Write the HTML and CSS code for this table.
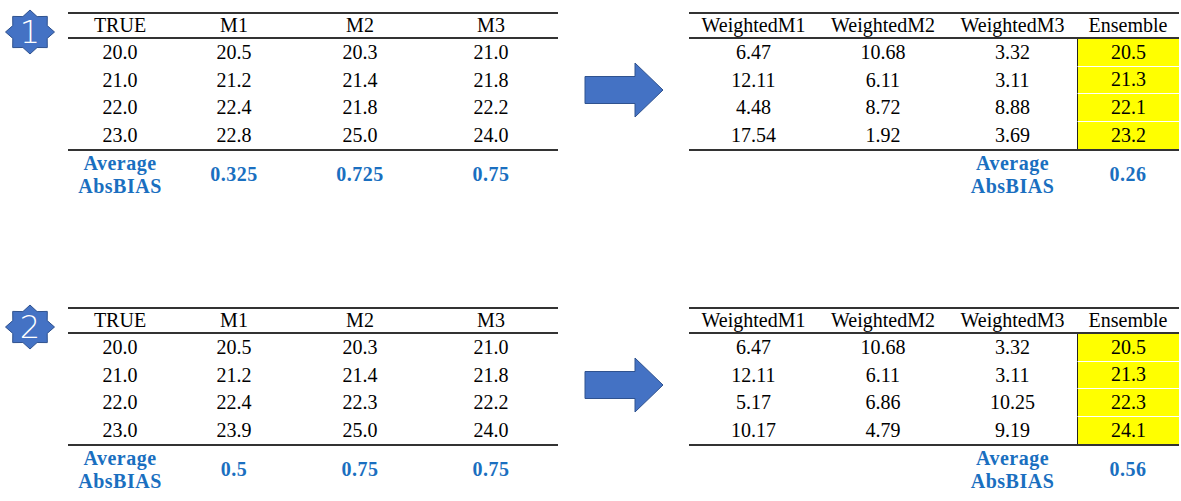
FILE: index.html
```html
<!DOCTYPE html>
<html>
<head>
<meta charset="utf-8">
<link rel="stylesheet" href="styles.css">
</head>
<body>
<div class="page">

  <section class="step">
    <div class="badge">
      <svg width="52" height="48" viewBox="0 0 52 48">
        <polygon points="26,2 33.1,8.6 43.3,8.4 43.2,17.6 50.5,24 43.2,30.4 43.3,39.6 33.1,39.5 26,46 18.9,39.5 8.7,39.6 8.8,30.4 1.5,24 8.8,17.6 8.7,8.4 18.9,8.6" fill="#4472C4" stroke="#2F528F" stroke-width="1"/>
      </svg>
      <span class="badge-num">1</span>
    </div>

    <div class="tbl tbl-left">
      <div class="row head"><span>TRUE</span><span>M1</span><span>M2</span><span>M3</span></div>
      <div class="body">
        <div class="row"><span>20.0</span><span>20.5</span><span>20.3</span><span>21.0</span></div>
        <div class="row"><span>21.0</span><span>21.2</span><span>21.4</span><span>21.8</span></div>
        <div class="row"><span>22.0</span><span>22.4</span><span>21.8</span><span>22.2</span></div>
        <div class="row"><span>23.0</span><span>22.8</span><span>25.0</span><span>24.0</span></div>
      </div>
      <div class="row foot"><span class="lbl">Average<br>AbsBIAS</span><span>0.325</span><span>0.725</span><span>0.75</span></div>
    </div>

    <div class="arrow">
      <svg width="80" height="57" viewBox="0 0 80 57">
        <polygon points="1,14.5 51,14.5 51,1 79,28 51,55 51,41.5 1,41.5" fill="#4472C4" stroke="#2F528F" stroke-width="1"/>
      </svg>
    </div>

    <div class="tbl tbl-right">
      <div class="row head"><span>WeightedM1</span><span>WeightedM2</span><span>WeightedM3</span><span>Ensemble</span></div>
      <div class="body">
        <div class="row"><span>6.47</span><span>10.68</span><span>3.32</span><span class="ens">20.5</span></div>
        <div class="row"><span>12.11</span><span>6.11</span><span>3.11</span><span class="ens">21.3</span></div>
        <div class="row"><span>4.48</span><span>8.72</span><span>8.88</span><span class="ens">22.1</span></div>
        <div class="row"><span>17.54</span><span>1.92</span><span>3.69</span><span class="ens last">23.2</span></div>
      </div>
      <div class="row foot"><span></span><span></span><span class="lbl">Average<br>AbsBIAS</span><span>0.26</span></div>
    </div>
  </section>

  <section class="step">
    <div class="badge">
      <svg width="52" height="48" viewBox="0 0 52 48">
        <polygon points="26,2 33.1,8.6 43.3,8.4 43.2,17.6 50.5,24 43.2,30.4 43.3,39.6 33.1,39.5 26,46 18.9,39.5 8.7,39.6 8.8,30.4 1.5,24 8.8,17.6 8.7,8.4 18.9,8.6" fill="#4472C4" stroke="#2F528F" stroke-width="1"/>
      </svg>
      <span class="badge-num">2</span>
    </div>

    <div class="tbl tbl-left">
      <div class="row head"><span>TRUE</span><span>M1</span><span>M2</span><span>M3</span></div>
      <div class="body">
        <div class="row"><span>20.0</span><span>20.5</span><span>20.3</span><span>21.0</span></div>
        <div class="row"><span>21.0</span><span>21.2</span><span>21.4</span><span>21.8</span></div>
        <div class="row"><span>22.0</span><span>22.4</span><span>22.3</span><span>22.2</span></div>
        <div class="row"><span>23.0</span><span>23.9</span><span>25.0</span><span>24.0</span></div>
      </div>
      <div class="row foot"><span class="lbl">Average<br>AbsBIAS</span><span>0.5</span><span>0.75</span><span>0.75</span></div>
    </div>

    <div class="arrow">
      <svg width="80" height="57" viewBox="0 0 80 57">
        <polygon points="1,14.5 51,14.5 51,1 79,28 51,55 51,41.5 1,41.5" fill="#4472C4" stroke="#2F528F" stroke-width="1"/>
      </svg>
    </div>

    <div class="tbl tbl-right">
      <div class="row head"><span>WeightedM1</span><span>WeightedM2</span><span>WeightedM3</span><span>Ensemble</span></div>
      <div class="body">
        <div class="row"><span>6.47</span><span>10.68</span><span>3.32</span><span class="ens">20.5</span></div>
        <div class="row"><span>12.11</span><span>6.11</span><span>3.11</span><span class="ens">21.3</span></div>
        <div class="row"><span>5.17</span><span>6.86</span><span>10.25</span><span class="ens">22.3</span></div>
        <div class="row"><span>10.17</span><span>4.79</span><span>9.19</span><span class="ens last">24.1</span></div>
      </div>
      <div class="row foot"><span></span><span></span><span class="lbl">Average<br>AbsBIAS</span><span>0.56</span></div>
    </div>
  </section>

</div>
</body>
</html>
```

FILE: styles.css
```css
html, body {
  margin: 0;
  padding: 0;
  background: #ffffff;
}

.page {
  width: 1181px;
  height: 501px;
  overflow: hidden;
  font-family: "Liberation Serif", "Times New Roman", serif;
  font-size: 20px;
  color: #000000;
}

.step {
  display: flex;
  align-items: flex-start;
  height: 295px;
  padding-top: 8px;
  box-sizing: border-box;
}

.badge {
  position: relative;
  width: 52px;
  height: 48px;
  margin-left: 4px;
  flex: none;
}

.badge svg {
  display: block;
}

.badge-num {
  position: absolute;
  left: 0;
  top: 0;
  width: 52px;
  height: 48px;
  line-height: 48px;
  text-align: center;
  color: #ffffff;
  font-family: "DejaVu Sans", sans-serif;
  font-weight: 200;
  font-size: 32px;
}

.tbl {
  flex: none;
  width: 490px;
  margin-top: 4px;
  border-top: 2px solid #333333;
}

.tbl-left {
  margin-left: 12px;
}

.tbl-right {
  margin-left: 25px;
}

.row {
  display: grid;
  align-items: center;
  text-align: center;
  height: 27.5px;
}

.tbl-left .row {
  grid-template-columns: 104px 124px 128px 134px;
}

.tbl-right .row {
  grid-template-columns: 129px 130px 129px 102px;
}

.row.head {
  height: 23px;
  border-bottom: 2px solid #333333;
}

.body {
  border-bottom: 2px solid #333333;
}

.row > span {
  display: flex;
  align-items: center;
  justify-content: center;
  height: 100%;
}

.ens {
  background: #ffff00;
  border-left: 1px solid #222222;
  border-bottom: 1px solid #ffffff;
  box-sizing: border-box;
}

.ens.last {
  border-bottom: none;
}

.row.foot {
  height: 47px;
  color: #1a6fc0;
  font-weight: bold;
  letter-spacing: 0.5px;
}

.foot .lbl {
  line-height: 23px;
}

.arrow {
  flex: none;
  margin-left: 26px;
  margin-top: 54px;
}

.arrow svg {
  display: block;
}
```
